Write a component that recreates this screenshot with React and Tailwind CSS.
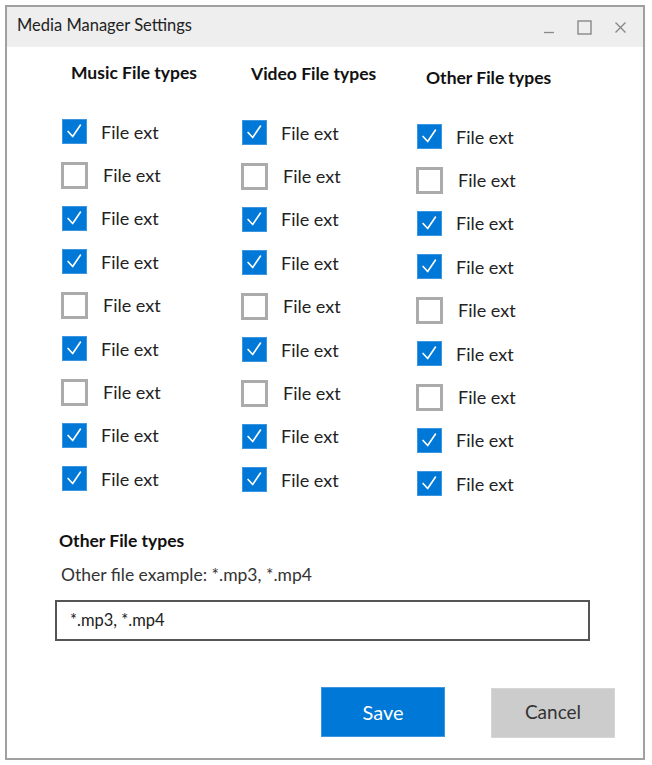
import React from "react";

const music = [true, false, true, true, false, true, false, true, true];
const video = [true, false, true, true, false, true, false, true, true];
const other = [true, false, true, true, false, true, false, true, true];

function Check({ on }) {
  return (
    <div className="h-[43.4px] flex items-center">
      <div className="w-[27px] h-[27px] flex items-center justify-center shrink-0">
        {on ? (
          <div className="w-[25px] h-[25px] bg-[#0078d7] border border-[#3d96e0] flex items-center justify-center">
            <svg width="25" height="25" viewBox="0 0 25 25" fill="none">
              <path d="M5.5 12.5 L10.5 18 L19 5.5" stroke="white" strokeWidth="1.8" strokeLinecap="round" strokeLinejoin="round" />
            </svg>
          </div>
        ) : (
          <div className="w-[27px] h-[27px] border-[3px] border-[#ababab] bg-white" />
        )}
      </div>
      <span className={`${on ? "ml-[13px]" : "ml-[15px]"} text-[18px] text-[#222] leading-none`}>File ext</span>
    </div>
  );
}

function Column({ title, items, className }) {
  return (
    <div className={className}>
      <div className="pl-[10px] h-[20px] leading-[20px] text-[17.5px] font-bold text-[#111] whitespace-nowrap">{title}</div>
      <div className="mt-[27px]">
        {items.map((on, i) => (
          <Check key={i} on={on} />
        ))}
      </div>
    </div>
  );
}

export default function App() {
  return (
    <div className="w-[652px] h-[765px] bg-white pt-[5px] pl-[5px]" style={{ fontFamily: "Lato, 'Noto Sans', sans-serif" }}>
      <div className="w-[640px] h-[755px] border-2 border-[#a0a0a0] flex flex-col">
        <div className="h-[40px] bg-[#eeeeee] flex items-center justify-between pl-[10px] pr-[16px]">
          <span className="text-[16.5px] text-[#222] -mt-[4px]">Media Manager Settings</span>
          <div className="flex items-center gap-[22px] text-[#888]">
            <svg width="12" height="14" viewBox="0 0 12 14">
              <path d="M1 12.5 H11" stroke="#888" strokeWidth="1.3" />
            </svg>
            <svg width="15" height="15" viewBox="0 0 15 15">
              <rect x="1" y="1" width="13" height="13" stroke="#888" strokeWidth="1.4" fill="none" />
            </svg>
            <svg width="13" height="13" viewBox="0 0 13 13">
              <path d="M1.5 1.5 L11.5 11.5 M11.5 1.5 L1.5 11.5" stroke="#888" strokeWidth="1.4" />
            </svg>
          </div>
        </div>

        <div className="flex pl-[54px] pt-[16px]">
          <Column title="Music File types" items={music} className="w-[180px]" />
          <Column title="Video File types" items={video} className="w-[175px] mt-[1px]" />
          <Column title="Other File types" items={other} className="w-[175px] mt-[5px]" />
        </div>

        <div className="pl-[48px] mt-[25px] flex flex-col">
          <div className="ml-[4px] h-[20px] leading-[20px] text-[17.5px] font-bold text-[#111]">Other File types</div>
          <div className="ml-[6px] mt-[14px] h-[20px] leading-[20px] text-[17.5px] text-[#333]">Other file example: *.mp3, *.mp4</div>
          <div className="mt-[15px] w-[535px] h-[41px] border-2 border-[#555] flex items-center pl-[13px]">
            <span className="text-[16.5px] text-[#222]">*.mp3, *.mp4</span>
          </div>
        </div>

        <div className="flex pl-[314px] gap-[46px] mt-[46px]">
          <button className="w-[124px] h-[50px] bg-[#0078d7] border border-[#3d96e0] text-white text-[20px]">Save</button>
          <button className="w-[124px] h-[50px] mt-[1px] bg-[#cccccc] border border-[#d6d6d6] text-[#333] text-[19px]">Cancel</button>
        </div>
      </div>
    </div>
  );
}
